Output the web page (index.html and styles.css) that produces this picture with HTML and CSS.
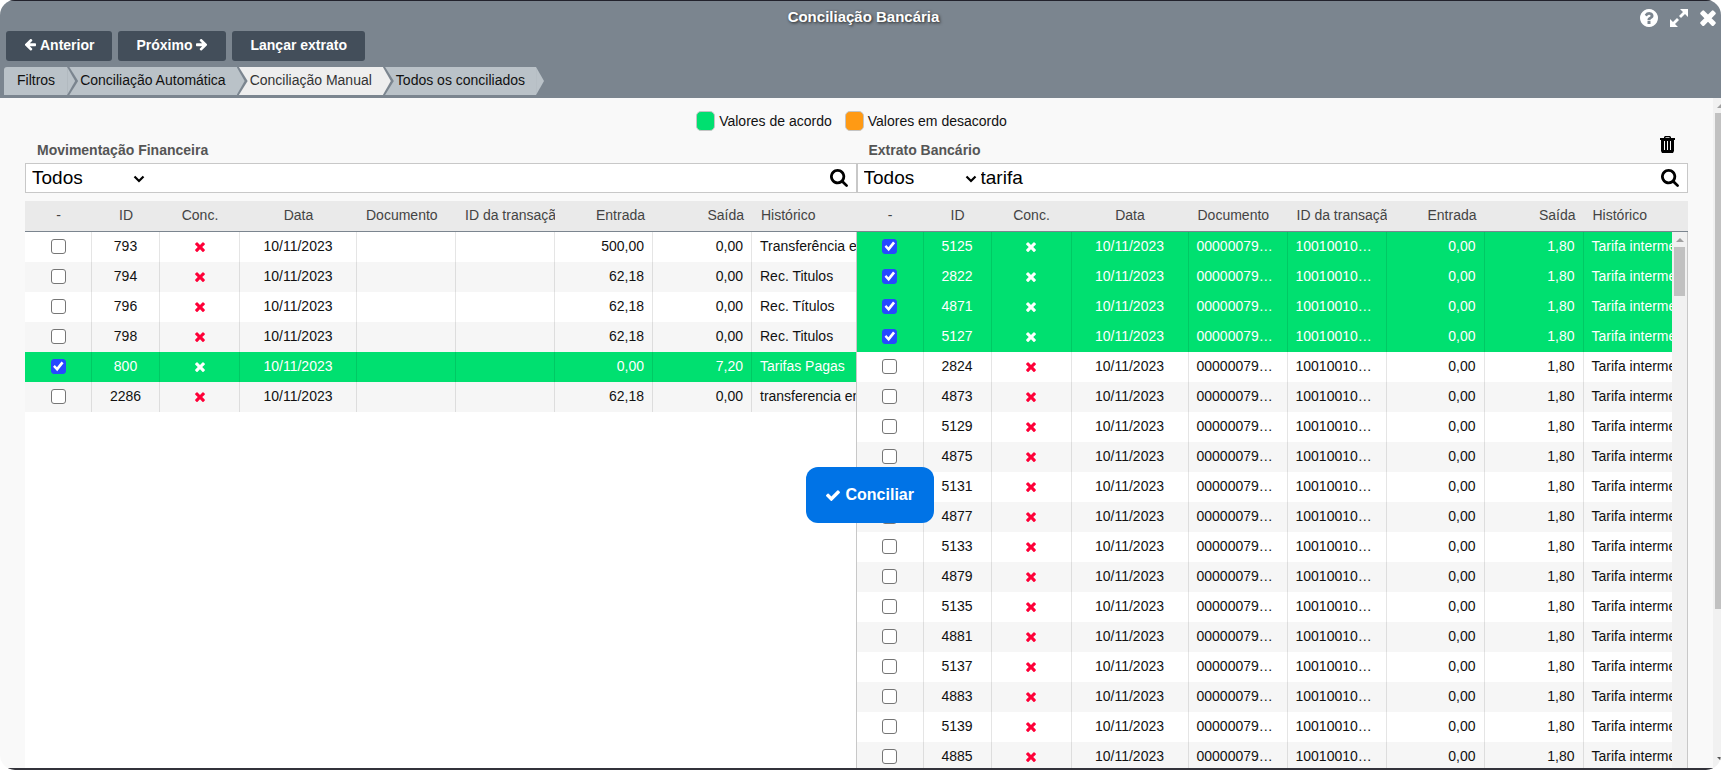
FILE: index.html
```html
<!DOCTYPE html>
<html lang="pt-BR">
<head>
<meta charset="utf-8">
<title>Conciliação Bancária</title>
<link rel="stylesheet" href="styles.css">
</head>
<body>
<svg class="sprite" aria-hidden="true">
  <symbol id="i-times" viewBox="302 338 1188 1216"><path d="M1490 1322q0 40-28 68l-136 136q-28 28-68 28t-68-28l-294-294-294 294q-28 28-68 28t-68-28l-136-136q-28-28-28-68t28-68l294-294-294-294q-28-28-28-68t28-68l136-136q28-28 68-28t68 28l294 294 294-294q28-28 68-28t68 28l136 136q28 28 28 68t-28 68l-294 294 294 294q28 28 28 68z"/></symbol>
  <symbol id="i-check" viewBox="121 320 1550 1202"><path d="M1671 566q0 40-28 68l-724 724-136 136q-28 28-68 28t-68-28l-136-136-362-362q-28-28-28-68t28-68l136-136q28-28 68-28t68 28l294 295 656-657q28-28 68-28t68 28l136 136q28 28 28 68z"/></symbol>
  <symbol id="i-search" viewBox="64 128 1664 1664"><path d="M1216 832q0-185-131.500-316.500t-316.500-131.500-316.500 131.500-131.500 316.500 131.500 316.500 316.500 131.500 316.500-131.500 131.500-316.500zm512 832q0 52-38 90t-90 38q-54 0-90-38l-343-342q-179 124-399 124-143 0-273.500-55.500t-225-150-150-225-55.500-273.500 55.500-273.500 150-225 225-150 273.500-55.500 273.500 55.500 225 150 150 225 55.500 273.500q0 220-124 399l343 343q37 37 37 90z"/></symbol>
  <symbol id="i-help" viewBox="128 128 1536 1536"><path d="M1024 1376v-192q0-14-9-23t-23-9h-192q-14 0-23 9t-9 23v192q0 14 9 23t23 9h192q14 0 23-9t9-23zm256-672q0-88-55.500-163t-138.500-116-170-41q-243 0-371 213-15 24 8 42l132 100q7 6 19 6 16 0 25-12 53-68 86-92 34-24 86-24 48 0 85.500 26t37.500 59q0 38-20 61t-68 45q-63 28-115.500 86.500t-52.500 125.500v36q0 14 9 23t23 9h192q14 0 23-9t9-23q0-19 21.500-49.500t54.500-49.500q32-18 49-28.500t46-35 44.500-48 28-60.500 12.500-81zm384 192q0 209-103 385.500t-279.500 279.500-385.500 103-385.500-103-279.500-279.500-103-385.500 103-385.500 279.500-279.500 385.500-103 385.500 103 279.500 279.500 103 385.500z"/></symbol>
  <symbol id="i-arrow" viewBox="64 256 1600 1472"><path d="M1664 896v128q0 53-32.500 90.500t-84.500 37.500h-704l293 294q38 36 38 90t-38 90l-75 76q-37 37-90 37-52 0-91-37l-651-652q-37-37-37-90 0-52 37-91l651-650q38-38 91-38 52 0 90 38l75 74q38 38 38 91t-38 91l-293 293h704q52 0 84.500 37.500t32.500 90.500z"/></symbol>
  <symbol id="i-expand" viewBox="0 0 18 18"><path d="M10 0h8v8l-3-3-4 4-2-2 4-4zM0 10l3 3 4-4 2 2-4 4 3 3H0z"/></symbol>
  <symbol id="i-trash" viewBox="0 0 15 17"><path fill-rule="evenodd" d="M4 2V1l1-1h5l1 1v1h4v2h-1v11l-1 2H2l-1-2V4H0V2zM5.500 1.200V2h4v-.8zM4 5v9h1V5zM7 5v9h1V5zM10 5v9h1V5z"/></symbol>
  <symbol id="i-chevron" viewBox="0 0 12 8"><path d="M1.500 1.500 6 6l4.500-4.500" fill="none" stroke="currentColor" stroke-width="2.200"/></symbol>
</svg>

<div class="window">
  <header class="top">
    <div class="titlebar">
      <h1 class="title">Conciliação Bancária</h1>
      <div class="window-actions">
        <button class="icon-btn" aria-label="Ajuda"><svg class="icon icon-18"><use href="#i-help"/></svg></button>
        <button class="icon-btn" aria-label="Expandir"><svg class="icon icon-18"><use href="#i-expand"/></svg></button>
        <button class="icon-btn" aria-label="Fechar"><svg class="icon icon-16"><use href="#i-times"/></svg></button>
      </div>
    </div>
    <div class="toolbar">
      <button class="btn"><svg class="icon icon-12"><use href="#i-arrow"/></svg>Anterior</button>
      <button class="btn">Próximo<svg class="icon icon-12 flip"><use href="#i-arrow"/></svg></button>
      <button class="btn">Lançar extrato</button>
    </div>
    <nav class="steps">
      <button class="step">Filtros</button>
      <button class="step">Conciliação Automática</button>
      <button class="step active" aria-current="step">Conciliação Manual</button>
      <button class="step">Todos os conciliados</button>
    </nav>
  </header>

  <div class="body">
    <main class="content">
      <div class="legend">
        <span class="legend-item"><i class="swatch ok"></i>Valores de acordo</span>
        <span class="legend-item"><i class="swatch bad"></i>Valores em desacordo</span>
      </div>

      <div class="panels">
        <section class="panel">
          <div class="panel-head"><h2 class="panel-title">Movimentação Financeira</h2></div>
          <div class="search">
            <span class="pick"><select class="filter" aria-label="Filtro da movimentação"><option>Todos</option></select><svg class="icon caret"><use href="#i-chevron"/></svg></span>
            <input class="query" type="text" aria-label="Buscar na movimentação">
            <button class="icon-btn dark" aria-label="Buscar"><svg class="icon icon-18"><use href="#i-search"/></svg></button>
          </div>
          <table class="grid head">
            <colgroup><col class="c-sel"><col class="c-id"><col class="c-conc"><col class="c-date"><col class="c-num"><col class="c-num"><col class="c-credit"><col class="c-num"><col></colgroup>
            <thead><tr><th class="mid">-</th><th class="mid">ID</th><th class="mid">Conc.</th><th class="mid">Data</th><th>Documento</th><th>ID da transação</th><th class="num">Entrada</th><th class="num">Saída</th><th>Histórico</th></tr></thead>
          </table>
          <div class="rows">
            <table class="grid">
              <colgroup><col class="c-sel"><col class="c-id"><col class="c-conc"><col class="c-date"><col class="c-num"><col class="c-num"><col class="c-credit"><col class="c-num"><col></colgroup>
              <tbody id="movements"></tbody>
            </table>
          </div>
        </section>

        <section class="panel">
          <div class="panel-head"><h2 class="panel-title">Extrato Bancário</h2>
            <button class="icon-btn dark" aria-label="Excluir"><svg class="icon trash"><use href="#i-trash"/></svg></button></div>
          <div class="search">
            <span class="pick"><select class="filter" aria-label="Filtro do extrato"><option>Todos</option></select><svg class="icon caret"><use href="#i-chevron"/></svg></span>
            <input class="query" type="text" value="tarifa" aria-label="Buscar no extrato">
            <button class="icon-btn dark" aria-label="Buscar"><svg class="icon icon-18"><use href="#i-search"/></svg></button>
          </div>
          <table class="grid head">
            <colgroup><col class="c-sel"><col class="c-id"><col class="c-conc"><col class="c-date"><col class="c-num"><col class="c-num"><col class="c-credit"><col class="c-num"><col></colgroup>
            <thead><tr><th class="mid">-</th><th class="mid">ID</th><th class="mid">Conc.</th><th class="mid">Data</th><th>Documento</th><th>ID da transação</th><th class="num">Entrada</th><th class="num">Saída</th><th>Histórico</th></tr></thead>
          </table>
          <div class="rows scrolled">
            <table class="grid">
              <colgroup><col class="c-sel"><col class="c-id"><col class="c-conc"><col class="c-date"><col class="c-num"><col class="c-num"><col class="c-credit"><col class="c-num"><col></colgroup>
              <tbody id="statement"></tbody>
            </table>
            <div class="scrollbar inner"><i class="arrow-up"></i><i class="thumb"></i></div>
          </div>
        </section>
        <button class="reconcile"><svg class="icon check"><use href="#i-check"/></svg>Conciliar</button>
      </div>
    </main>
    <div class="scrollbar outer"><i class="arrow-up"></i><i class="thumb"></i><i class="arrow-down"></i></div>
  </div>
</div>
<script src="script.js"></script>
</body>
</html>
```

FILE: styles.css
```css
* { box-sizing: border-box; }

body {
  margin: 0;
  background: #fff;
  color: #111;
  font: 14px/20px "Liberation Sans", Arial, sans-serif;
}

button, input, select { font: inherit; color: inherit; margin: 0; }
h1, h2 { margin: 0; }

.sprite { position: absolute; width: 0; height: 0; }
.icon { display: block; flex: none; fill: currentColor; }
.icon-18 { width: 18px; height: 18px; }
.icon-16 { width: 16px; height: 16px; }
.icon-12 { width: 12px; height: 12px; }
.flip { transform: scaleX(-1); }

.window {
  height: 100vh;
  display: flex;
  flex-direction: column;
  overflow: hidden;
  background: #f9f9f9;
  border-radius: 15px;
}

.top { flex: none; background: #7b858f; border-top: 1px solid #22222c; }

.titlebar {
  display: grid;
  grid-template-columns: 1fr auto 1fr;
  align-items: center;
  height: 30px;
  padding: 1px 0 0 6px;
}
.title {
  grid-column: 2;
  color: #fff;
  font-size: 15px;
  line-height: 20px;
  text-shadow: 1px 1px 3px #222;
}
.window-actions {
  justify-self: end;
  display: flex;
  align-items: center;
  gap: 12px;
  padding: 2px 5px 0 0;
  color: #fff;
}
.icon-btn {
  display: flex;
  padding: 0;
  border: 0;
  background: none;
}
.dark { color: #000; }

.toolbar { display: flex; gap: 6px; padding: 0 6px; }
.btn {
  display: flex;
  align-items: center;
  gap: 4px;
  height: 30px;
  padding: 0 18px 2px;
  border: 0;
  border-radius: 3px;
  background: #434e5a;
  color: #fff;
  font-weight: bold;
}

.steps { display: flex; gap: 2px; padding: 6px 4px 3px; }
.step {
  position: relative;
  height: 28px;
  padding: 0 11px 2px;
  border: 0;
  background: #bac2c8;
}
.step:first-child { padding: 0 12px 2px 13px; border-radius: 3px 0 0 0; }
.step.active { background: #eee; color: #333; }
.step::before, .step::after {
  content: "";
  position: absolute;
  z-index: 1;
  top: 0;
  left: 100%;
  width: 8px;
  height: 28px;
  background: inherit;
  clip-path: polygon(0 0, 100% 50%, 0 100%);
}
.step::before {
  width: 11px;
  background: #7b858f;
  clip-path: polygon(0 0, 20% 0, 100% 50%, 20% 100%, 0 100%);
}
.step:last-child::before { display: none; }

.body { flex: 1; min-height: 0; display: flex; border-bottom: 2px solid #33333b; }
.content {
  flex: 1;
  min-width: 0;
  display: flex;
  flex-direction: column;
  padding: 13px 25px 0;
}

.legend { display: flex; justify-content: center; gap: 13px; padding-right: 10px; color: #111; }
.legend-item { display: flex; align-items: center; gap: 4px; }
.swatch {
  width: 19px;
  height: 20px;
  border: 1px solid #c4c4c4;
  border-radius: 5px;
}
.ok { background: #00e070; }
.bad { background: #ff9a14; }

.panels {
  position: relative;
  flex: 1;
  min-height: 0;
  display: grid;
  grid-template-columns: 1fr 1fr;
}
.panel { min-width: 0; min-height: 0; display: flex; flex-direction: column; }
.panel-head {
  display: flex;
  justify-content: space-between;
  height: 32px;
  padding: 5px 13px 0 12px;
}
.panel-head .icon-btn { align-items: flex-start; }
.panel-title {
  padding-top: 4px;
  color: #555;
  font-size: 14px;
  line-height: 20px;
}
.trash { width: 15px; height: 17px; }

.search {
  flex: none;
  display: flex;
  align-items: center;
  height: 30px;
  margin-bottom: 8px;
  padding-right: 8px;
  border: 1px solid #c8c8c8;
  background: #fff;
  color: #000;
  font-size: 19px;
}
.pick { position: relative; width: 123px; }
.filter {
  width: 100%;
  height: 28px;
  padding: 0 6px;
  border: 0;
  background: none;
  appearance: none;
}
.caret {
  position: absolute;
  right: 4px;
  top: 11px;
  width: 12px;
  height: 8px;
  pointer-events: none;
}
.query {
  flex: 1;
  min-width: 0;
  height: 28px;
  padding: 0;
  border: 0;
  background: none;
  outline: 0;
}

.grid { width: 100%; border-collapse: separate; border-spacing: 0; table-layout: fixed; }
.c-sel { width: 67px; }
.c-id { width: 68px; }
.c-conc { width: 80px; }
.c-date { width: 117px; }
.c-num { width: 99px; }
.c-credit { width: 98px; }

.grid th, .grid td {
  height: 30px;
  padding: 0 8px;
  overflow: hidden;
  text-align: left;
  white-space: nowrap;
}
.head { flex: none; }
.grid th {
  height: 31px;
  border-bottom: 1px solid #7b858f;
  padding: 0 0 2px 9px;
  background: #eaeaea;
  color: #444;
  font-weight: normal;
}
.grid td { border-right: 1px solid #0000001a; padding: 0 8px 2px; }
.grid td:last-child { border-right: 0; }
.grid tr > .num { text-align: right; padding-right: 8px; }
.grid tr > .mid { text-align: center; padding-left: 0; padding-right: 0; }
.grid .cut { text-overflow: ellipsis; padding-right: 12px; }

tbody tr:nth-child(even) { background: #f6f6f6; }
tbody tr:nth-child(n).selected { background: #00e070; color: #fff; }

.rows {
  flex: 1;
  min-height: 0;
  overflow: hidden;
  border-right: 1px solid #c8c8c8;
  background: #fff;
}
.scrolled { display: flex; align-items: stretch; }
.scrolled .grid { flex: 1; min-width: 0; align-self: flex-start; }

.mark { width: 10px; height: 10px; margin: 2px auto 0; color: #ff0038; }
.selected .mark { color: #fff; }

.tick {
  display: block;
  appearance: none;
  width: 15px;
  height: 15px;
  margin: 1px auto 0;
  border: 1px solid #767676;
  border-radius: 3px;
  background: #fff;
}
.tick:checked {
  border-color: #2748ff;
  background: #2748ff;
}
.tick:checked::before {
  content: "";
  display: block;
  width: 13px;
  height: 13px;
  background: #fff;
  clip-path: polygon(12% 52%, 25% 39%, 42% 56%, 77% 12%, 93% 25%, 44% 86%);
}

.reconcile {
  position: absolute;
  top: 50%;
  left: 50%;
  display: flex;
  align-items: center;
  gap: 6px;
  height: 56px;
  margin: 17px 0 0 -51px;
  padding: 1px 20px 0;
  border: 0;
  border-radius: 12px;
  background: #0073e6;
  color: #fff;
  font-size: 16px;
  font-weight: bold;
}
.check { width: 14px; height: 11px; }

.scrollbar { flex: none; background: #f1f1f1; overflow: hidden; }
.scrollbar i { display: block; }
.inner { width: 15px; height: auto; }
.inner .thumb { width: 11px; height: 49px; margin: 5px 2px 0; background: #c1c1c1; }
.arrow-up {
  width: 8px;
  height: 4px;
  margin: 6px 4px 0;
  background: #a0a0a0;
  clip-path: polygon(50% 0, 100% 100%, 0 100%);
}
.outer { width: 8px; display: flex; flex-direction: column; }
.outer .thumb { flex: 0 0 74%; margin: 5px 0 0 2px; background: #c1c1c1; }
.outer .arrow-down {
  width: 8px;
  height: 4px;
  margin: auto 4px 7px;
  background: #555;
  clip-path: polygon(0 0, 100% 0, 50% 100%);
}
```

FILE: script.js
```js
const movements = [
  ["793", "500,00", "0,00", "Transferência entre contas"],
  ["794", "62,18", "0,00", "Rec. Titulos"],
  ["796", "62,18", "0,00", "Rec. Títulos"],
  ["798", "62,18", "0,00", "Rec. Titulos"],
  ["800", "0,00", "7,20", "Tarifas Pagas", true],
  ["2286", "62,18", "0,00", "transferencia entre contas"]
].map(([id, credit, debit, memo, selected]) => ({ id, doc: "", tx: "", credit, debit, memo, selected }));

const statement = [
  5125, 2822, 4871, 5127, 2824, 4873, 5129, 4875, 5131,
  4877, 5133, 4879, 5135, 4881, 5137, 4883, 5139, 4885
].map((id, i) => ({
  id, doc: "00000079000000", tx: "10010010000000",
  credit: "0,00", debit: "1,80", memo: "Tarifa intermediação", selected: i < 4
}));

const row = r => `<tr class="${r.selected ? "selected" : ""}">
  <td class="mid"><input class="tick" type="checkbox" aria-label="Selecionar ${r.id}" ${r.selected ? "checked" : ""}></td>
  <td class="mid">${r.id}</td>
  <td class="mid"><svg class="icon mark"><use href="#i-times"/></svg></td>
  <td class="mid">10/11/2023</td>
  <td class="cut">${r.doc}</td>
  <td class="cut">${r.tx}</td>
  <td class="num">${r.credit}</td>
  <td class="num">${r.debit}</td>
  <td>${r.memo}</td></tr>`;

document.getElementById("movements").innerHTML = movements.map(row).join("");
document.getElementById("statement").innerHTML = statement.map(row).join("");
```
